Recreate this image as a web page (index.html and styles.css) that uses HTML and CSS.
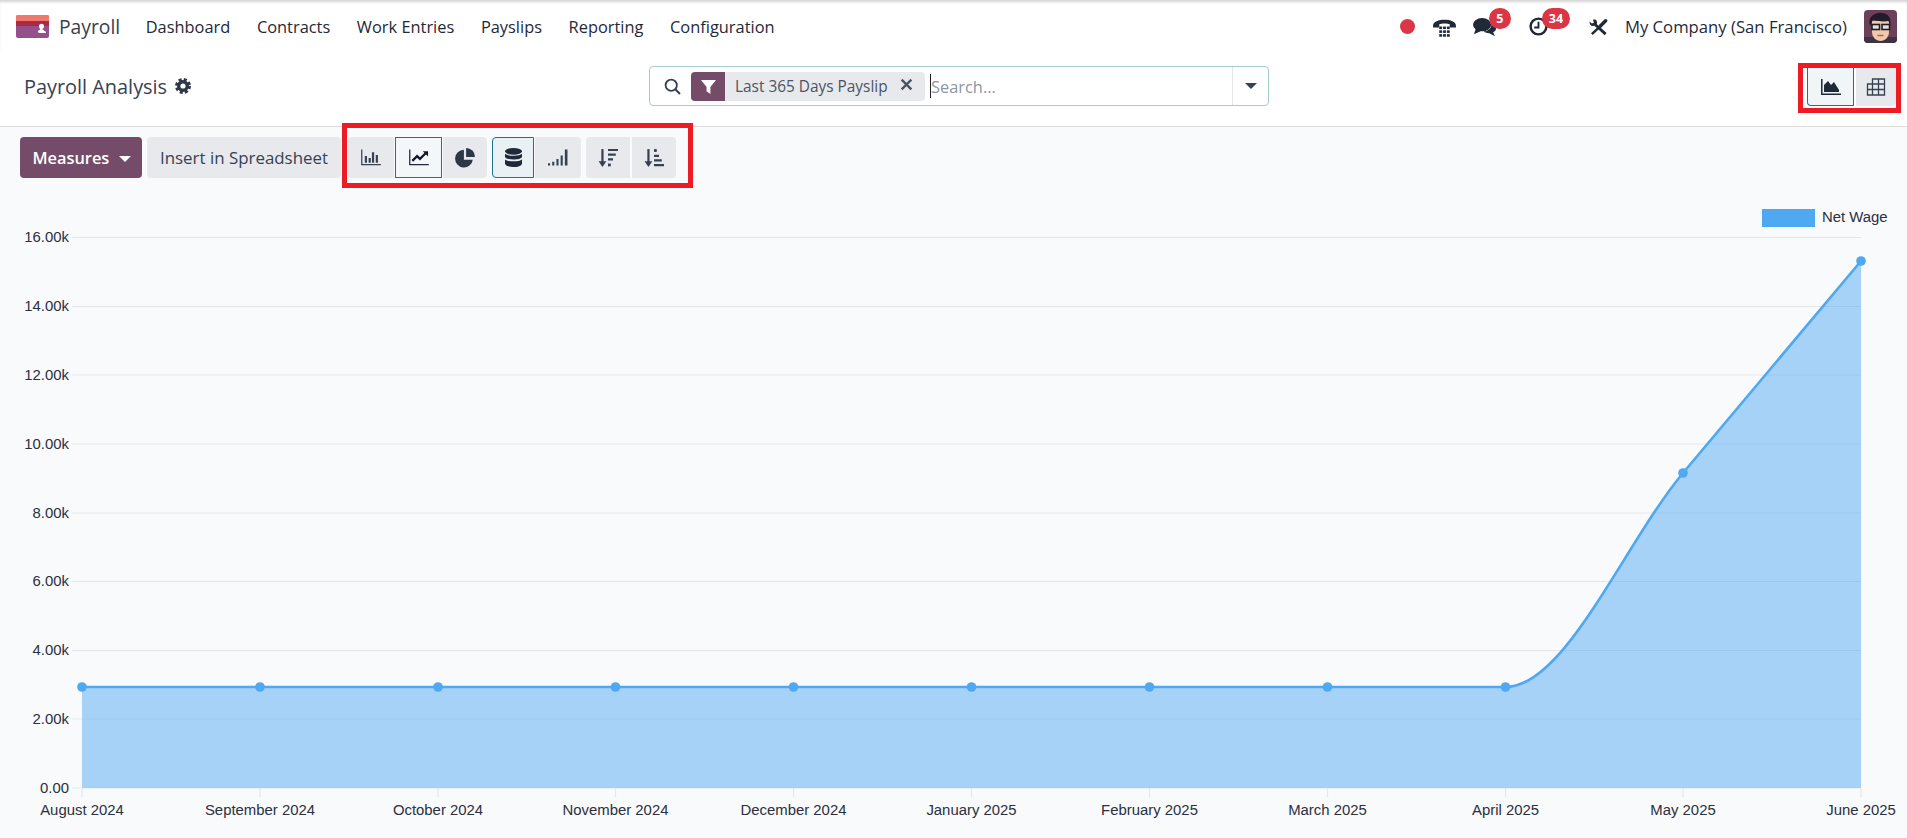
FILE: index.html
```html
<!DOCTYPE html>
<html lang="en">
<head>
<meta charset="utf-8">
<title>Payroll Analysis</title>
<link rel="stylesheet" href="styles.css">
</head>
<body>
<header class="nav">
  <svg class="logo" viewBox="0 0 33 23"><rect width="33" height="23" rx="2" fill="#95508c"/><path d="M0 2a2 2 0 0 1 2-2h29a2 2 0 0 1 2 2v5H0z" fill="#f0796d"/><rect y="6" width="33" height="5" fill="#ad2843"/><path d="M23 11c0-3 5-3 5 0 0 2-1 3-2 3l4 3v1h-7c-2-1-1-3 1-3 1 0-1-2-1-4z" fill="#fff"/></svg>
  <span class="brand">Payroll</span>
  <nav class="menu"><a>Dashboard</a><a>Contracts</a><a>Work Entries</a><a>Payslips</a><a>Reporting</a><a>Configuration</a></nav>
  <div class="systray">
    <span class="dot"></span>
    <svg class="tray-phone" viewBox="0 0 24 21"><path d="M0 9C0 1 24 1 24 9v2h-6.500V7.500C15 6.500 9 6.500 6.500 7.500V11H0z" fill="#1f2937"/><g fill="#1f2937"><rect x="6.500" y="10" width="3" height="2.700"/><rect x="10.500" y="10" width="3" height="2.700"/><rect x="14.500" y="10" width="3" height="2.700"/><rect x="6.500" y="14" width="3" height="2.700"/><rect x="10.500" y="14" width="3" height="2.700"/><rect x="14.500" y="14" width="3" height="2.700"/><rect x="6.500" y="18" width="3" height="2.700"/><rect x="10.500" y="18" width="3" height="2.700"/><rect x="14.500" y="18" width="3" height="2.700"/></g></svg>
    <span class="tray-chat"><svg viewBox="0 0 24 20"><ellipse cx="9.500" cy="8" rx="9.500" ry="7" fill="#1f2937"/><path d="M3 12 1 18l7-3z" fill="#1f2937"/><path d="M19 7c3 1 5 3 5 5s-1 3-3 4l2 4-6-3c-3 0-5-1-6-2 5 0 9-4 8-8z" fill="#1f2937"/></svg><b class="badge badge-chat">5</b></span>
    <span class="tray-clock"><svg viewBox="0 0 20 20"><circle cx="10" cy="10" r="8.300" fill="none" stroke="#1f2937" stroke-width="2.600"/><path d="M10 5v6H5.500" fill="none" stroke="#1f2937" stroke-width="2"/></svg><b class="badge badge-clock">34</b></span>
    <svg class="tray-tools" viewBox="0 0 20 18"><path d="M5 5 17.500 16.500" stroke="#1f2937" stroke-width="3"/><path d="M.6 3.200 3 5.400l2.200-1-1-3C7.500.4 9.200 3 8.200 6l-3 1.800C2.200 8.600.4 6.300.6 3.200z" fill="#1f2937"/><path d="M17.500 2.500 12 8" stroke="#1f2937" stroke-width="3.600" stroke-linecap="round"/><path d="M12 8 3 16.500" stroke="#1f2937" stroke-width="2.600"/></svg>
    <span class="company">My Company (San Francisco)</span>
    <svg class="avatar" viewBox="0 0 33 33"><rect width="33" height="33" rx="4" fill="#6b4058"/><path d="M0 27h33v2a4 4 0 0 1-4 4H4a4 4 0 0 1-4-4z" fill="#3d3342"/><path d="M8 11h17v11c0 5-4 9-8.500 9S8 27 8 22z" fill="#efc9aa"/><path d="M6 16C3 7 11 2 18 3c6 0 10 5 8 13l-1.500-5C19 12 13 11 9 9.500z" fill="#221c28"/><g fill="#dfe3e3" stroke="#221c28" stroke-width="1.600"><rect x="8" y="14.500" width="7.500" height="5"/><rect x="18" y="14.500" width="7.500" height="5"/></g><path d="M13.500 25.500h6" stroke="#a0685a" stroke-width="1.500"/></svg>
  </div>
</header>

<section class="panel">
  <div class="title"><span>Payroll Analysis</span>
    <svg class="gear" viewBox="0 0 16 16"><circle cx="8" cy="8" r="4.300" fill="none" stroke="#2d3748" stroke-width="3.400"/><circle cx="8" cy="8" r="6.500" fill="none" stroke="#2d3748" stroke-width="3" stroke-dasharray="3 2.100"/></svg>
  </div>
  <div class="search">
    <svg class="search-icon" viewBox="0 0 16 16"><circle cx="6.800" cy="6.800" r="5.300" fill="none" stroke="#374151" stroke-width="1.700"/><path d="m10.700 10.700 4.300 4.300" stroke="#374151" stroke-width="2"/></svg>
    <div class="facet">
      <span class="facet-icon"><svg viewBox="0 0 14 14"><path d="M0 1h14L8.800 7.500V14L5.200 11.500V7.500z" fill="#fff"/></svg></span>
      <span class="facet-label">Last 365 Days Payslip</span>
      <svg class="facet-x" viewBox="0 0 12 12"><path d="m1.500 1.500 9 9m0-9-9 9" stroke="#4b5563" stroke-width="2.200"/></svg>
    </div>
    <span class="search-input"><span class="caret"></span>Search...</span>
    <span class="search-drop"><i class="tri tri-dark"></i></span>
  </div>
  <div class="switch hl">
    <button class="ibtn wide"><svg viewBox="0 0 20 16"><path d="M.8 0v15.200H20" fill="none" stroke="#1f2937" stroke-width="1.500"/><path d="M3 13V6l4-4 3 4 3-3 5 8v2z" fill="#1f2937"/></svg></button>
    <button class="ibtn narrow"><svg viewBox="0 0 18 18"><path d="M5.500 6V1h12v16H.5V6h17M.5 11.500h17M5.500 6v11M11.500 1v16" fill="none" stroke="#374151" stroke-width="1.300"/></svg></button>
  </div>
</section>

<section class="toolbar">
  <button class="btn primary">Measures <i class="tri tri-white"></i></button>
  <button class="btn second">Insert in Spreadsheet</button>
  <div class="hl tools">
    <div class="grp">
      <button class="tbtn w46"><svg viewBox="0 0 21 17"><path d="M.8 0v16h20" fill="none" stroke="#374151" stroke-width="1.300"/><path d="M4 7h2.300v7H4zM8 9h2.300v5H8zM11.500 3h2.300v11h-2.300zM15.500 6h2.300v8h-2.300z" fill="#374151"/></svg></button>
      <button class="tbtn w47 active-sq"><svg viewBox="0 0 21 17"><path d="M.8 0v16h20" fill="none" stroke="#1f2937" stroke-width="1.300"/><path d="m3.500 12 5-5 3 3 6-6" fill="none" stroke="#111827" stroke-width="2.400"/><path d="M14.500 2H20v5.500z" fill="#111827"/></svg></button>
      <button class="tbtn w44 end"><svg class="tall" viewBox="0 0 18 18"><path d="M8 1.500a8 8 0 1 0 8 9H8z" fill="#2d3748"/><path d="M10 0a8 8 0 0 1 8 8h-8z" fill="#2d3748"/></svg></button>
    </div>
    <div class="grp">
      <button class="tbtn w42 active-rd"><svg class="stack" viewBox="0 0 16 17" preserveAspectRatio="none"><g fill="#1f2937"><ellipse cx="8" cy="3" rx="8" ry="3"/><path d="M0 5.200C2 7.500 14 7.500 16 5.200V8c-1 3-15 3-16 0z"/><path d="M0 10.200c2 2.300 14 2.300 16 0V14c-1 4-15 4-16 0z"/></g></svg></button>
      <button class="tbtn w46 end"><svg viewBox="0 0 19 15"><path d="M0 13h2v2H0zM4 11.500h2V15H4zM8 9h2v6H8zM12 5.500h2V15h-2zM16 0h2.500v15H16z" fill="#374151"/></svg></button>
    </div>
    <div class="grp gap2">
      <button class="tbtn w44 solo-l"><svg class="tall" viewBox="0 0 18 18"><path d="M4 1v13" stroke="#374151" stroke-width="2"/><path d="M.5 12H7.500L4 17z" fill="#374151"/><path d="M9 1.800h9M9 6h7M9 10.200h4.500" stroke="#374151" stroke-width="2"/><rect x="9" y="14" width="2.500" height="2.500" fill="#374151"/></svg></button>
      <button class="tbtn w44 solo-r"><svg class="tall" viewBox="0 0 18 18"><path d="M4 1v13" stroke="#374151" stroke-width="2"/><path d="M.5 12H7.500L4 17z" fill="#374151"/><rect x="9" y="1" width="2.500" height="2.500" fill="#374151"/><path d="M9 7h4.500M9 11.200h7M9 15.500h9" stroke="#374151" stroke-width="2"/></svg></button>
    </div>
  </div>
</section>

<svg class="chart" viewBox="0 188 1907 650">
  <g class="grid">
    <path d="M72 237.500H1861M72 306.500H1861M72 375H1861M72 444H1861M72 513H1861M72 581.500H1861M72 650.500H1861M72 719H1861M72 788H1861"/>
    <path d="M82 788v9M260 788v9M438 788v9M615.500 788v9M793.500 788v9M971.500 788v9M1149.500 788v9M1327.500 788v9M1505.500 788v9M1683 788v9M1861 788v9"/>
  </g>
  <path class="area" d="M82 687H1505.500C1565 687 1624 544 1683 473C1742 402 1802 332 1861 261V788H82Z"/>
  <path class="line" d="M82 687H1505.500C1565 687 1624 544 1683 473C1742 402 1802 332 1861 261"/>
  <g class="pts">
    <circle cx="82" cy="687" r="4.800"/><circle cx="260" cy="687" r="4.800"/><circle cx="438" cy="687" r="4.800"/><circle cx="615.500" cy="687" r="4.800"/><circle cx="793.500" cy="687" r="4.800"/><circle cx="971.500" cy="687" r="4.800"/><circle cx="1149.500" cy="687" r="4.800"/><circle cx="1327.500" cy="687" r="4.800"/><circle cx="1505.500" cy="687" r="4.800"/><circle cx="1683" cy="473" r="4.800"/><circle cx="1861" cy="261" r="4.800"/>
  </g>
  <rect class="legend" x="1762" y="209" width="53" height="18"/>
  <text class="lbl" x="1822" y="222">Net Wage</text>
  <g class="lbl yl">
    <text x="69" y="242">16.00k</text><text x="69" y="311">14.00k</text><text x="69" y="379.500">12.00k</text><text x="69" y="448.500">10.00k</text><text x="69" y="517.500">8.00k</text><text x="69" y="586">6.00k</text><text x="69" y="655">4.00k</text><text x="69" y="723.500">2.00k</text><text x="69" y="792.500">0.00</text>
  </g>
  <g class="lbl xl">
    <text x="82" y="815">August 2024</text><text x="260" y="815">September 2024</text><text x="438" y="815">October 2024</text><text x="615.500" y="815">November 2024</text><text x="793.500" y="815">December 2024</text><text x="971.500" y="815">January 2025</text><text x="1149.500" y="815">February 2025</text><text x="1327.500" y="815">March 2025</text><text x="1505.500" y="815">April 2025</text><text x="1683" y="815">May 2025</text><text x="1861" y="815">June 2025</text>
  </g>
</svg>
</body>
</html>
```

FILE: styles.css
```css
* { box-sizing: border-box; }
html, body { margin: 0; height: 100%; overflow: hidden; }
body { width: 1907px; height: 838px; background: #f9fafb; color: #1f2937; font-family: "Open Sans", "Noto Sans", sans-serif; display: flex; flex-direction: column; }
button { font: inherit; border: 0; padding: 0; margin: 0; }
svg { display: block; }

.nav { height: 50px; background: #fff; display: flex; align-items: center; padding: 3px 10px 0 16px; box-shadow: inset 0 3px 3px -1px #d4d4d4; }
.logo { width: 33px; height: 23px; margin-right: 10px; }
.brand { font-size: 19.300px; color: #374151; margin-right: 25.500px; }
.menu { display: flex; gap: 26.600px; font-size: 16.400px; color: #1f2937; }
.systray { margin-left: auto; display: flex; align-items: center; }
.dot { width: 15px; height: 15px; border-radius: 50%; background: #dc3545; margin-right: 18px; }
.tray-phone { width: 23px; height: 20px; margin-right: 17px; }
.tray-chat { position: relative; width: 23px; height: 19px; margin-right: 33px; }
.tray-clock { position: relative; width: 19px; height: 19px; margin-right: 41px; }
.tray-tools { width: 19px; height: 18px; margin-right: 17px; }
.badge { position: absolute; top: -9px; height: 21px; border-radius: 11px; background: #dc3545; color: #fff; font-size: 12.500px; font-weight: 700; line-height: 21px; text-align: center; }
.badge-chat { left: 16px; width: 22px; }
.badge-clock { left: 13px; width: 28px; }
.company { font-size: 16.700px; margin-right: 17px; color: #1f2937; }
.avatar { width: 33px; height: 33px; }

.panel { height: 77px; background: #fff; border-bottom: 1px solid #dcdcd8; display: flex; align-items: center; padding: 0 15px 4px 24px; }
.title { width: 625px; display: flex; align-items: center; gap: 8px; font-size: 19.900px; color: #374151; }
.gear { width: 16px; height: 16px; }
.search { width: 620px; height: 40px; border: 1px solid #a4cdd3; border-radius: 4px; background: #fff; display: flex; align-items: center; padding-left: 14px; }
.search-icon { width: 17px; height: 17px; margin-right: 10px; }
.facet { width: 234px; height: 29px; background: #e7e9ed; border-radius: 4px; display: flex; align-items: center; overflow: hidden; }
.facet-icon { width: 34px; height: 29px; background: #744c69; display: flex; align-items: center; justify-content: center; }
.facet-icon svg { width: 15px; height: 15px; }
.facet-label { font-size: 15.400px; color: #4b5563; margin-left: 10px; width: 165px; white-space: nowrap; }
.facet-x { width: 13px; height: 13px; margin-top: -3px; }
.search-input { flex: 1; display: flex; align-items: center; margin-left: 5px; font-size: 16.400px; color: #8d96a3; height: 28px; }
.caret { width: 1px; height: 24px; background: #222; }
.search-drop { width: 36px; height: 38px; border-left: 1px solid #e2e4e8; display: flex; align-items: center; justify-content: center; }
.tri { display: inline-block; width: 0; height: 0; border-left: 6px solid transparent; border-right: 6px solid transparent; }
.tri-dark { border-top: 6px solid #374151; }
.tri-white { border-top: 6px solid #fff; margin-left: 5px; vertical-align: 2px; }

.hl { border: 5px solid #ed1c24; background: transparent; }
.switch { margin-left: auto; display: flex; gap: 2px; padding: 0 0 0 4px; width: 103px; height: 50px; margin-top: 4px; margin-right: -9px; }
.ibtn { height: 38px; background: #e7e9ed; display: flex; align-items: center; justify-content: center; }
.ibtn.wide { width: 47px; background: #f0f5f8; border: 1px solid #1f6f9a; border-top: 0; border-radius: 0 0 0 4px; }
.ibtn.narrow { width: 40px; border-radius: 0 0 4px 0; }
.ibtn svg { width: 20px; height: 18px; }

.toolbar { height: 61px; display: flex; align-items: flex-start; padding: 10px 0 0 20px; }
.btn { height: 41px; font-size: 16.900px; border-radius: 4px; }
.primary { width: 122px; background: #744c69; color: #fff; font-weight: 600; font-size: 16.400px; margin-right: 5px; padding-left: 1px; }
.second { width: 194px; background: #e7e9ed; color: #374151; font-weight: 500; margin-right: 1px; }
.tools { display: flex; margin-top: -14px; padding: 9px 12px 5px 1px; width: 351px; height: 65px; gap: 5px; }
.grp { display: flex; gap: 1px; }
.gap2 { gap: 2px; }
.tbtn { height: 41px; background: #e7e9ed; display: flex; align-items: center; justify-content: center; }
.tbtn svg { width: 20px; height: 17px; }
.tbtn svg.tall { width: 20px; height: 20px; }
.tbtn svg.stack { width: 17px; height: 19px; }
.w46 { width: 46px; } .w47 { width: 47px; } .w44 { width: 44px; } .w42 { width: 42px; }
.tbtn:first-child { border-radius: 4px 0 0 4px; }
.end { border-radius: 0 4px 4px 0; }
.active-sq { background: #f3f7f9; border: 1px solid #1f6f9a; border-radius: 0; }
.active-rd { background: #e9f1f5; border: 1px solid #1f6f9a; }
.solo-l { border-radius: 4px 0 0 4px; }
.solo-r { border-radius: 0 4px 4px 0; }

.chart { width: 1907px; height: 650px; flex: none; }
.grid path { fill: none; stroke: #e6e7ea; stroke-width: 1.200; }
.area { fill: rgba(78, 168, 242, .48); }
.line { fill: none; stroke: #4ea8f2; stroke-width: 2.600; }
.pts circle { fill: #4ea8f2; }
.legend { fill: #4ea8f2; }
.lbl { font-family: "Liberation Sans", Arial, sans-serif; font-size: 14.900px; fill: #2b3040; }
.yl { text-anchor: end; }
.xl { text-anchor: middle; }
```
